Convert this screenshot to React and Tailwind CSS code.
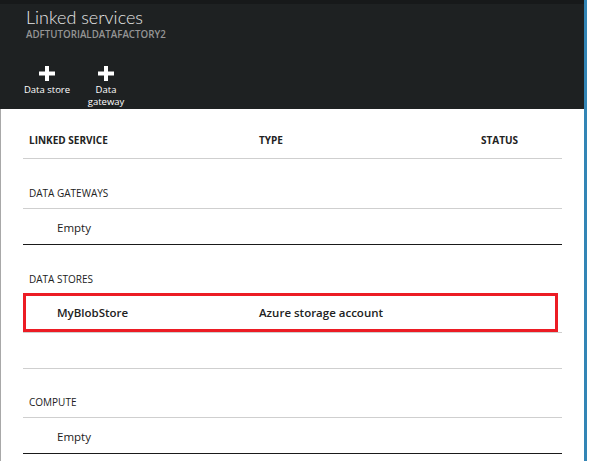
import React from "react";

const font = { fontFamily: '"Open Sans", "Noto Sans", sans-serif' };

const Plus = () => (
  <svg width="16" height="15" viewBox="0 0 16 15" className="block">
    <rect x="6" y="0" width="4" height="15" fill="#ffffff" />
    <rect x="0" y="5.5" width="16" height="4" fill="#ffffff" />
  </svg>
);

const SectionTitle = ({ children, className = "" }) => (
  <div className={`flex items-end pl-[6px] text-[10px] leading-[12px] text-[#222] ${className}`}>
    {children}
  </div>
);

const EmptyRow = ({ className = "" }) => (
  <div className={`flex h-[36px] items-center pl-[34px] pt-[3px] text-[11.5px] text-[#222] ${className}`}>
    Empty
  </div>
);

const App = () => {
  return (
    <div
      className="flex h-[461px] w-[591px] overflow-hidden bg-white"
      style={font}
    >
      <div className="flex w-[584px] flex-col">
        <header className="h-[109px] border-t-4 border-[#17191a] bg-[#1e2122] pl-[26px]">
          <h1
            className="text-[18px] font-light leading-[26px] text-[#e6e6e6]"
            style={{ fontFamily: 'Lato, "Open Sans", sans-serif' }}
          >
            Linked services
          </h1>
          <div className="-mt-[1px] text-[9.75px] font-semibold leading-[12px] text-[#959595]">
            ADFTUTORIALDATAFACTORY2
          </div>
          <div className="mt-[25px] -ml-[6px] flex gap-[5px] text-[9.5px] leading-[12px] text-white">
            <button className="flex w-[54px] flex-col items-center">
              <Plus />
              <span className="mt-[3px]">Data store</span>
            </button>
            <button className="flex w-[54px] flex-col items-center">
              <Plus />
              <span className="mt-[3px] text-center">Data</span>
              <span className="text-center">gateway</span>
            </button>
          </div>
        </header>

        <main className="flex-1 border-l border-[#a8a8a8] pl-[22px] pr-[22px]">
          <div className="grid h-[50px] grid-cols-[230px_222px_1fr] items-end border-b border-[#cfcfcf] pb-[12px] pl-[6px] text-[10px] font-bold leading-[12px] text-[#222]">
            <span>LINKED SERVICE</span>
            <span>TYPE</span>
            <span>STATUS</span>
          </div>

          <SectionTitle className="h-[50px] border-b border-[#cfcfcf] pb-[9px]">
            DATA GATEWAYS
          </SectionTitle>
          <EmptyRow className="border-b border-[#1a1a1a]" />

          <SectionTitle className="h-[48px] pb-[8px]">DATA STORES</SectionTitle>
          <div className="border-b border-[#cfcfcf]">
            <div className="mr-[4px] grid h-[39px] grid-cols-[202px_1fr] items-center border-[3px] border-[#ec1c24] pl-[31px] text-[11.5px] font-semibold text-[#222]">
              <span>MyBlobStore</span>
              <span>Azure storage account</span>
            </div>
          </div>

          <div className="h-[36px] border-b border-[#cfcfcf]" />

          <SectionTitle className="h-[49px] border-b border-[#cfcfcf] pb-[9px]">
            COMPUTE
          </SectionTitle>
          <EmptyRow className="border-b border-[#1a1a1a]" />
        </main>
      </div>
      <div className="w-[3px] bg-[#3385b5]" />
      <div className="w-[4px] bg-white" />
    </div>
  );
};

export default App;
